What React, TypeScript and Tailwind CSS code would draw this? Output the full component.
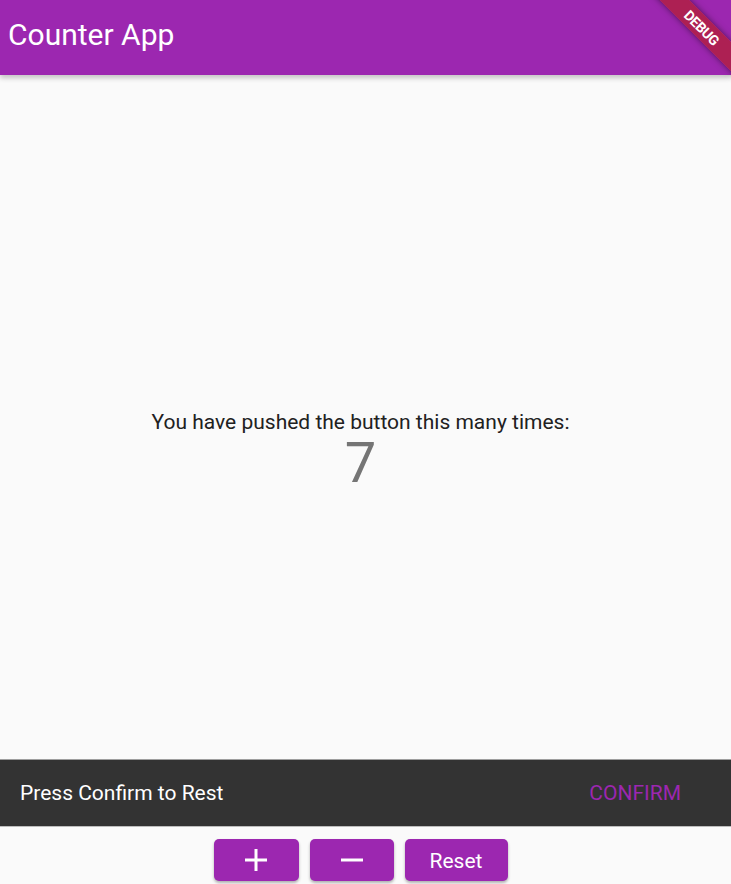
import React from "react";

export default function App() {
  return (
    <div
      className="relative w-[731px] h-[884px] overflow-hidden bg-[#fafafa] flex flex-col"
      style={{ fontFamily: "Roboto, 'Noto Sans', sans-serif" }}
    >
      <header className="relative z-10 h-[75px] shrink-0 bg-[#9c27b0] flex items-center pl-[8px] pb-[5px] shadow-[0_3px_5px_rgba(0,0,0,0.22)]">
        <h1 className="text-white text-[30px] leading-none">Counter App</h1>
      </header>

      <main className="relative flex-1 flex flex-col items-center justify-center pr-[10px] pb-[4px]">
        <p className="text-[#212121] text-[21px] leading-[28px]">
          You have pushed the button this many times:
        </p>
        <p className="text-[#757575] text-[56px] leading-[54px] font-normal">7</p>

        <div className="absolute left-0 right-0 bottom-0 h-[67px] bg-[#333333] border-t border-[#9e9e9e] flex items-center justify-between pl-[20px] pr-[50px]">
          <span className="text-white text-[21px] pt-[2px]">Press Confirm to Rest</span>
          <span className="text-[#9c27b0] text-[21px] pt-[2px]">CONFIRM</span>
        </div>
      </main>

      <footer className="h-[58px] shrink-0 border-t border-[#bdbdbd] flex justify-center items-start pt-[12px] pr-[10px] gap-[11px]">
        <button className="w-[85px] h-[42px] rounded-[5px] bg-[#9c27b0] shadow-[0_2px_3px_rgba(0,0,0,0.3)] flex items-center justify-center">
          <svg width="24" height="24" viewBox="0 0 24 24">
            <path d="M12 1v22M1 12h22" stroke="white" strokeWidth="3" />
          </svg>
        </button>
        <button className="w-[84px] h-[42px] rounded-[5px] bg-[#9c27b0] shadow-[0_2px_3px_rgba(0,0,0,0.3)] flex items-center justify-center">
          <svg width="24" height="24" viewBox="0 0 24 24">
            <path d="M1 12h22" stroke="white" strokeWidth="3" />
          </svg>
        </button>
        <button className="w-[103px] h-[42px] rounded-[5px] bg-[#9c27b0] shadow-[0_2px_3px_rgba(0,0,0,0.3)] flex items-center justify-center text-white text-[21px] pt-[3px]">
          Reset
        </button>
      </footer>

      <div className="absolute left-[622px] top-[17px] w-[160px] h-[21px] rotate-45 bg-[#b71c1c]/[0.63] shadow-[0_0_6px_rgba(0,0,0,0.5)] flex items-center justify-center z-20">
        <span className="text-white text-[14px] font-bold leading-none tracking-tight">DEBUG</span>
      </div>
    </div>
  );
}
